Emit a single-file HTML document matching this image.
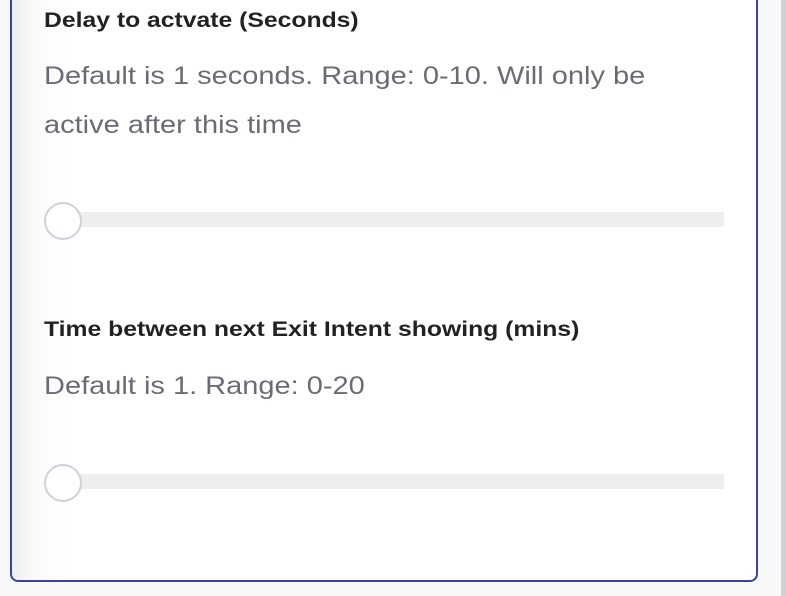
<!DOCTYPE html>
<html><head><style>
body{margin:0;width:786px;height:596px;background:#f8f8f9;position:relative;overflow:hidden;font-family:"Liberation Sans",sans-serif}
.bar{position:absolute;left:781px;top:0;width:5px;height:596px;background:#cfcfd6}
.card{position:absolute;left:10px;top:-20px;width:744px;height:600px;border:2px solid #3b43a0;border-top:none;border-radius:0 0 8px 8px;background:linear-gradient(90deg,#efefef 0,#fafafa 25px,#fff 60px)}
.h{position:absolute;left:44px;font-weight:bold;font-size:21.5px;color:#222;transform:scaleX(1.15);transform-origin:left;white-space:nowrap}
.d{position:absolute;left:44px;font-size:25px;color:#6b6b78;line-height:49px;transform:scaleX(1.16);transform-origin:left;white-space:nowrap}
.track{position:absolute;left:62px;width:662px;height:15px;background:#eeeeee}
.th{position:absolute;left:44px;width:34px;height:34px;border:2px solid #cfd0da;border-radius:50%;background:#fff}
</style></head><body>
<div class="bar"></div>
<div class="card"></div>
<div class="h" style="top:8px">Delay to actvate (Seconds)</div>
<div class="d" style="top:52px">Default is 1 seconds. Range: 0-10. Will only be<br>active after this time</div>
<div class="track" style="top:212px"></div>
<div class="th" style="top:202px"></div>
<div class="h" style="top:317px">Time between next Exit Intent showing (mins)</div>
<div class="d" style="top:362px">Default is 1. Range: 0-20</div>
<div class="track" style="top:474px"></div>
<div class="th" style="top:464px"></div>
</body></html>
